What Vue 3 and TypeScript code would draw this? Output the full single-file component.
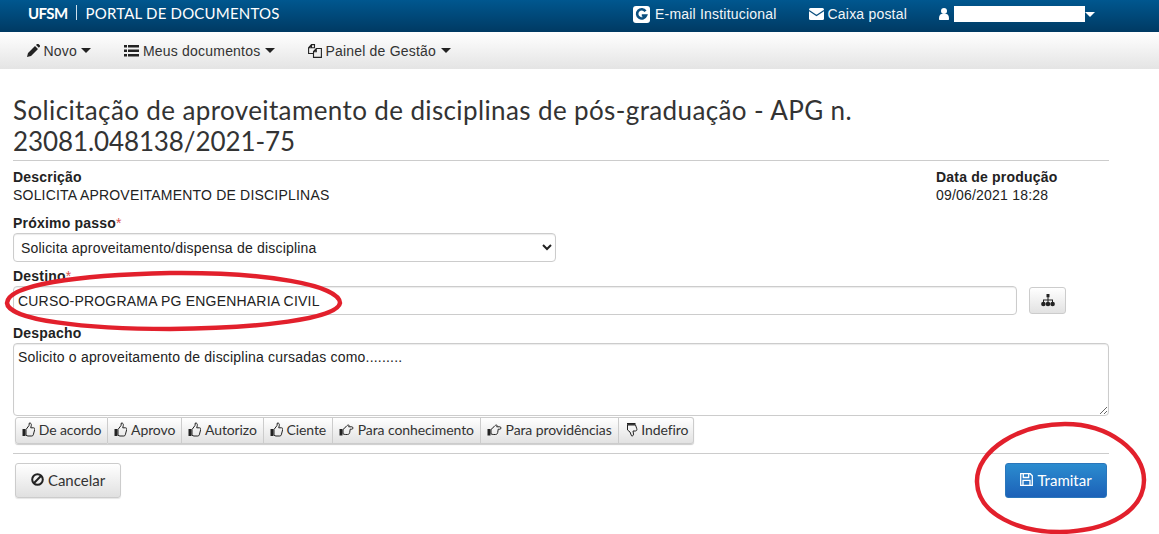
<script setup lang="ts">
const up = { w: 13, wrist: 'M.5 7h3v7h-3z', d: 'M4 7.500L7 3.500 7.300 1c1.500-.3 2.300 1 2 2.500L8.700 5.800h2.800c1 0 1.500.8 1.200 1.800l-1.400 5.200c-.2.800-.7 1.200-1.500 1.200H6c-.8 0-1.300-.4-2-.8z' }
const right = { w: 15, wrist: 'M.5 7h3v6.500h-3z', d: 'M4 7.500l3-2.800c.6-.6 1.600-1.700 2.300-1.700 1 0 1 1 .3 1.800h3.200c1.600 0 1.600 2.400 0 2.400h-1.600l-.5 3.300c-.3 1.400-1 2-2.200 2H6.300c-.9 0-1.500-.3-2.300-.7z' }
const down = { w: 13, wrist: 'M2 1h8.500v1.800H2z', d: 'M2.500 3h8l1.300 3.800c.4 1.300-.3 2.200-1.500 2.200H8l.5 3c.2 1.300-.8 2.300-2 1.800L5 10 2.500 8z' }
const actions = [
  { label: 'De acordo', icon: up },
  { label: 'Aprovo', icon: up },
  { label: 'Autorizo', icon: up },
  { label: 'Ciente', icon: up },
  { label: 'Para conhecimento', icon: right },
  { label: 'Para providências', icon: right },
  { label: 'Indefiro', icon: down },
]
</script>

<template>
  <div class="page">
    <header class="top">
      <div class="brand"><b>UFSM</b><i class="sep"></i><span>PORTAL DE DOCUMENTOS</span></div>
      <nav class="top-links">
        <a class="tl l1">
          <svg width="17" height="17" viewBox="0 0 17 17"><rect x="0" y="0" width="17" height="17" rx="3" fill="#fff"/><path d="M12.500 5.200A4.600 4.600 0 1 0 13 9.500H8.800" fill="none" stroke="#0b4f7f" stroke-width="2.600"/></svg>
          E-mail Institucional
        </a>
        <a class="tl l2">
          <svg width="15" height="12" viewBox="0 0 15 12"><rect width="15" height="12" rx="1.500" fill="#fff"/><path d="M0 2.500l7.500 5 7.500-5" fill="none" stroke="#0b4f7f" stroke-width="1.200"/></svg>
          Caixa postal
        </a>
        <a class="tl l3">
          <svg width="10" height="12" viewBox="0 0 10 12"><circle cx="5" cy="3" r="3" fill="#fff"/><path d="M0 11c0-4 1.500-5 3-5h4c1.500 0 3 1 3 5 0 .6-.4 1-1 1H1c-.6 0-1-.4-1-1z" fill="#fff"/></svg>
          <span class="redact"></span><span class="caret white"></span>
        </a>
      </nav>
    </header>

    <nav class="menu">
      <a class="m">
        <svg width="13" height="13" viewBox="0 0 13 13"><path d="M0 13l1-4 7-7 3 3-7 7zM9 1l1-1c.5-.3 1-.3 1.500 0l1.300 1.300c.3.500.3 1 0 1.500l-1 1z" fill="#222"/></svg>
        Novo<span class="caret"></span>
      </a>
      <a class="m">
        <svg width="15" height="12" viewBox="0 0 15 12" fill="#222"><path d="M0 0h3v2.500H0zM4 0h11v2.500H4zM0 4.500h3V7H0zM4 4.500h11V7H4zM0 9h3v2.500H0zM4 9h11v2.500H4z"/></svg>
        Meus documentos<span class="caret"></span>
      </a>
      <a class="m">
        <svg width="14" height="14" viewBox="0 0 14 14" fill="none" stroke="#222" stroke-width="1.100"><path d="M5.500 9.500H.6V3.800L3.500.6h3v3.200H3.500V.8M.8 3.800h2.700"/><path d="M5.500 13.400V7.500L8.300 4.500h5.100v8.900zM8.300 4.700v3H5.700"/></svg>
        Painel de Gestão<span class="caret"></span>
      </a>
    </nav>

    <main class="content">
      <h1>Solicitação de aproveitamento de disciplinas de pós-graduação - APG n.<br><span class="num">23081.048138/2021-75</span></h1>
      <hr class="rule-title">
      <div class="info">
        <div><strong>Descrição</strong><p>SOLICITA APROVEITAMENTO DE DISCIPLINAS</p></div>
        <div class="date"><strong>Data de produção</strong><p>09/06/2021 18:28</p></div>
      </div>

      <label class="lab lab-step" for="step">Próximo passo<em>*</em></label>
      <select id="step" class="ctl sel"><option>Solicita aproveitamento/dispensa de disciplina</option></select>

      <label class="lab lab-dest" for="dest">Destino<em>*</em></label>
      <div class="dest-row">
        <input id="dest" class="ctl inp" value="CURSO-PROGRAMA PG ENGENHARIA CIVIL">
        <button class="tree" aria-label="Estrutura">
          <svg width="14" height="13" viewBox="0 0 14 13" fill="#222"><path d="M5.500 0h3v3.200h-3zM6.500 3.200h1v2.300h4.500V8h-1V6.500h-3.500V8h-1V6.500H3V8H2V5.500h4.500z"/><circle cx="2.400" cy="10" r="2.300"/><circle cx="7" cy="10" r="2.300"/><circle cx="11.600" cy="10" r="2.300"/></svg>
        </button>
      </div>

      <label class="lab lab-desp" for="desp">Despacho</label>
      <textarea id="desp" class="ctl area">Solicito o aproveitamento de disciplina cursadas como.........</textarea>

      <div class="group">
        <button v-for="a in actions" :key="a.label" class="g-btn">
          <svg :width="a.icon.w" height="15" :viewBox="`0 0 ${a.icon.w} 15`"><path :d="a.icon.wrist" fill="#222"/><path :d="a.icon.d" fill="none" stroke="#222" stroke-width="1"/></svg>
          {{ a.label }}
        </button>
      </div>
      <hr class="rule-foot">

      <div class="foot">
        <button class="btn cancel">
          <svg width="13" height="13" viewBox="0 0 13 13" fill="none" stroke="#222" stroke-width="2"><circle cx="6.500" cy="6.500" r="5.300"/><path d="M2.800 10.200l7.400-7.400"/></svg>
          Cancelar
        </button>
        <button class="btn send">
          <svg width="13" height="13" viewBox="0 0 13 13" fill="none" stroke="#fff" stroke-width="1.300"><path d="M.7.700h9.500l2.100 2.100v9.500H.7zM3.300.9v3.600h5.400V.9M3 12v-4.700h7V12"/></svg>
          Tramitar
        </button>
      </div>
    </main>

    <svg class="marks" width="1159" height="534" viewBox="0 0 1159 534" fill="none" stroke="#e2202c" stroke-width="4.500">
      <path d="M7 303C8 285 75 275 170 273C265 272 340 285 340 303C338 319 260 328 170 329C85 329 8 320 7 303Z"/>
      <path d="M977 482C976 450 1020 424 1065 424C1110 424 1144 452 1144 480C1144 510 1110 531 1060 532C1020 532 978 515 977 482Z"/>
    </svg>
  </div>
</template>

<style>
html, body { margin: 0; background: #fff; }
</style>

<style scoped>
.page { position: relative; width: 1159px; height: 534px; overflow: hidden; font-family: "Liberation Sans", Arial, sans-serif; font-size: 14px; letter-spacing: .2px; color: #222; background: #fff; }
.top { height: 32px; box-sizing: border-box; display: flex; align-items: flex-start; background: linear-gradient(#00578f, #003a63); color: #fff; }
.brand { display: flex; align-items: center; height: 25px; padding-left: 28px; font-family: "Lato", sans-serif; font-size: 15px; letter-spacing: .2px; }
.brand b { font-weight: 700; letter-spacing: -.6px; }
.sep { width: 1px; height: 15px; background: #cfe0ec; margin: 0 9px 0 8px; }
.top-links { margin-left: auto; display: flex; height: 28px; align-items: center; padding-right: 64px; }
.tl { display: flex; align-items: center; gap: 4px; font-size: 14px; color: #f2f6f9; }
.l1 { gap: 5px; }
.l2 { margin-left: 32px; }
.l3 { margin-left: 32px; gap: 5px; }
.redact { width: 131px; height: 16px; background: #fff; }
.caret { display: inline-block; width: 0; height: 0; border-left: 5px solid transparent; border-right: 5px solid transparent; border-top: 5px solid #222; margin-left: 1px; }
.caret.white { border-top-color: #fff; margin-left: -5px; }
.menu { height: 37px; display: flex; align-items: center; padding-left: 27px; gap: 33px; background: linear-gradient(#fff, #e4e4e4); color: #333; }
.m { display: flex; align-items: center; gap: 3.500px; }
.content { padding: 0 50px 0 13px; }
h1 { margin: 26px 0 0; font-family: "Lato", sans-serif; font-weight: 400; font-size: 26px; line-height: 31px; color: #333; letter-spacing: .38px; }
.num { letter-spacing: -.1px; }
hr { margin: 0; border: 0; border-top: 1px solid #ccc; }
.rule-title { margin-top: 3px; }
.info { display: flex; justify-content: space-between; padding-top: 7px; padding-right: 52px; line-height: 18px; }
.info strong { display: block; white-space: nowrap; }
.info p { margin: 0; white-space: nowrap; }
.date { width: 121px; }
.lab { display: block; font-weight: 700; line-height: 18px; }
.lab em { color: #d9534f; font-style: normal; font-weight: 400; }
.lab-step { margin-top: 10px; }
.lab-dest { margin-top: 5px; }
.lab-desp { margin-top: 9px; }
.ctl { box-sizing: border-box; display: block; font-family: "Liberation Sans", Arial, sans-serif; font-size: 14px; letter-spacing: .2px; color: #222; border: 1px solid #ccc; border-radius: 4px; background: #fff; padding: 0 4px; box-shadow: inset 0 1px 1px rgba(0,0,0,.08); outline: none; }
.sel { width: 543px; height: 29px; margin-top: 1px; padding: 0 3px; }
.dest-row { display: flex; align-items: center; gap: 12px; margin-top: 1px; }
.inp { width: 1004px; height: 29px; }
.tree { width: 37px; height: 27px; padding: 0; display: flex; align-items: center; justify-content: center; border: 1px solid #ccc; border-radius: 3px; background: linear-gradient(#fff, #e2e2e2); }
.area { width: 1096px; height: 73px; padding: 4px; line-height: 18px; resize: vertical; margin-top: 1px; }
.group { display: inline-flex; margin: 1px 0 0 2px; vertical-align: top; border-radius: 3px; box-shadow: 0 1px 1px rgba(0,0,0,.2); }
.g-btn { display: flex; align-items: center; gap: 3.700px; height: 27px; box-sizing: border-box; padding: 0 6px 2px; font-family: "Lato", sans-serif; font-size: 14px; letter-spacing: -.1px; color: #333; border: 1px solid #ccc; border-left-width: 0; background: linear-gradient(#fff, #e2e2e2); white-space: nowrap; }
.g-btn:first-child { border-left-width: 1px; border-radius: 3px 0 0 3px; }
.g-btn:last-child { border-radius: 0 3px 3px 0; padding-right: 5px; }
.rule-foot { margin-top: 9px; }
.foot { display: flex; justify-content: space-between; padding: 9px 2px 0; }
.btn { display: flex; align-items: center; justify-content: center; gap: 4px; height: 35px; box-sizing: border-box; font-family: "Lato", sans-serif; font-size: 15px; letter-spacing: 0; border-radius: 3px; padding: 0 0 2px; }
.cancel { width: 106px; color: #333; border: 1px solid #ccc; background: linear-gradient(#fff, #e0e0e0); box-shadow: 0 1px 1px rgba(0,0,0,.1); }
.send { width: 102px; color: #fff; border: 1px solid #2a76bb; background: linear-gradient(#2b8ccf, #1c61b8); }
.marks { position: absolute; left: 0; top: 0; pointer-events: none; }
</style>
